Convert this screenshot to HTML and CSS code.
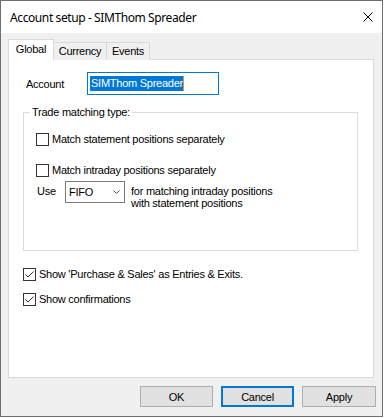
FILE: index.html
```html
<!DOCTYPE html>
<html lang="en">
<head>
    <meta charset="UTF-8">
    <meta name="viewport" content="width=device-width, initial-scale=1.0">
    <title>Account setup - SIMThom Spreader</title>
    <link rel="stylesheet" href="styles.css">
</head>
<body>
    <div class="window">
        <div class="titlebar">
            <span class="title">Account setup - SIMThom Spreader</span>
            <svg class="close" width="10" height="10" viewBox="0 0 10 10">
                <path d="M0.5 0.5 L9.5 9.5 M9.5 0.5 L0.5 9.5" stroke="#000" stroke-width="1" fill="none"/>
            </svg>
        </div>
        <div class="body">
            <div class="tabs">
                <div class="tab active" style="width: 46px">Global</div>
                <div class="tab" style="width: 53px">Currency</div>
                <div class="tab" style="width: 44px">Events</div>
            </div>
            <div class="panel">
                <div class="account-row">
                    <label class="account-label">Account</label>
                    <div class="textbox"><span class="selected">SIMThom Spreader</span><span class="caret"></span></div>
                </div>

                <fieldset class="group">
                    <legend>Trade matching type:</legend>
                    <div class="check-row first">
                        <span class="box"></span>
                        <span>Match statement positions separately</span>
                    </div>
                    <div class="check-row second">
                        <span class="box"></span>
                        <span>Match intraday positions separately</span>
                    </div>
                    <div class="use-row">
                        <span class="use-label">Use</span>
                        <div class="combo">
                            <span>FIFO</span>
                            <svg width="7" height="4" viewBox="0 0 7 4">
                                <path d="M0.5 0.5 L3.5 3.5 L6.5 0.5" stroke="#555" stroke-width="1" fill="none"/>
                            </svg>
                        </div>
                        <div class="use-text">for matching intraday positions<br>with statement positions</div>
                    </div>
                </fieldset>

                <div class="check-row outer top">
                    <span class="box">
                        <svg width="11" height="11" viewBox="0 0 11 11">
                            <path d="M1.5 5.5 L4 8 L9.5 2.5" stroke="#333" stroke-width="1" fill="none"/>
                        </svg>
                    </span>
                    <span>Show 'Purchase &amp; Sales' as Entries &amp; Exits.</span>
                </div>
                <div class="check-row outer next">
                    <span class="box">
                        <svg width="11" height="11" viewBox="0 0 11 11">
                            <path d="M1.5 5.5 L4 8 L9.5 2.5" stroke="#333" stroke-width="1" fill="none"/>
                        </svg>
                    </span>
                    <span>Show confirmations</span>
                </div>
            </div>
            <div class="buttons">
                <button class="btn" style="width: 73px">OK</button>
                <button class="btn default" style="width: 73px">Cancel</button>
                <button class="btn" style="width: 74px">Apply</button>
            </div>
        </div>
    </div>
</body>
</html>
```

FILE: styles.css
```css
* {
    box-sizing: border-box;
}
body {
    margin: 0;
    background: #fff;
    font-family: "Liberation Sans", Arial, sans-serif;
    font-size: 11px;
    letter-spacing: -0.25px;
    color: #000;
}
.window {
    width: 383px;
    height: 417px;
    border: 1px solid #6f6f6f;
    display: flex;
    flex-direction: column;
}
.titlebar {
    height: 32px;
    background: #fff;
    display: flex;
    align-items: center;
    justify-content: space-between;
    padding: 0 9px 0 9px;
}
.title {
    font-family: "Noto Sans", sans-serif;
    font-size: 12px;
    letter-spacing: -0.4px;
}
.body {
    flex: 1;
    background: #f0f0f0;
    padding: 7px 6px 8px 7px;
    display: flex;
    flex-direction: column;
}
.tabs {
    display: flex;
    align-items: flex-end;
    height: 20px;
    margin-bottom: -1px;
    position: relative;
    z-index: 1;
}
.tab {
    height: 18px;
    line-height: 17px;
    text-align: center;
    border: 1px solid #d9d9d9;
    border-bottom: none;
    background: #f0f0f0;
}
.tab + .tab {
    margin-left: -1px;
}
.tab.active {
    height: 21px;
    line-height: 18px;
    background: #fff;
    position: relative;
    z-index: 2;
}
.tab.active + .tab {
    border-left: none;
    margin-left: 0;
}
.panel {
    width: 366px;
    height: 319px;
    border: 1px solid #d9d9d9;
    background: #fff;
}
.account-row {
    display: flex;
    align-items: center;
    margin-top: 12px;
    padding-left: 17px;
}
.account-label {
    width: 61px;
}
.textbox {
    width: 132px;
    height: 23px;
    border: 1px solid #0078d7;
    padding: 2px 2px;
    display: flex;
    align-items: center;
}
.selected {
    background: #0078d7;
    color: #fff;
    line-height: 15px;
    padding: 0 0 0 1px;
}
.caret {
    width: 1px;
    height: 15px;
    background: #e8912e;
}
.group {
    margin: 11px 0 0 14px;
    width: 335px;
    height: 145px;
    border: 1px solid #dcdcdc;
    padding: 0 6px;
}
.group legend {
    padding: 0 2px;
    line-height: 13px;
}
.check-row {
    display: flex;
    align-items: center;
    gap: 3px;
    height: 13px;
    line-height: 13px;
    margin-left: 6px;
}
.check-row.first {
    margin-top: 14px;
}
.check-row.second {
    margin-top: 18px;
}
.box {
    width: 13px;
    height: 13px;
    border: 1px solid #333;
    background: #fff;
    display: flex;
}
.use-row {
    display: flex;
    align-items: flex-start;
    margin: 4px 0 0 7px;
}
.use-label {
    width: 28px;
    line-height: 13px;
    margin-top: 4px;
}
.combo {
    width: 60px;
    height: 22px;
    border: 1px solid #7a7a7a;
    background: #fff;
    display: flex;
    align-items: center;
    justify-content: space-between;
    padding: 0 4px 0 3px;
}
.use-text {
    margin-left: 6px;
    margin-top: 4px;
    line-height: 12px;
}
.check-row.outer {
    margin-left: 14px;
}
.check-row.top {
    margin-top: 17px;
}
.check-row.next {
    margin-top: 12px;
}
.buttons {
    display: flex;
    justify-content: flex-end;
    gap: 8px;
    margin-top: 8px;
}
.btn {
    height: 21px;
    background: #e1e1e1;
    border: 1px solid #adadad;
    font-family: "Liberation Sans", Arial, sans-serif;
    font-size: 11px;
    letter-spacing: -0.25px;
    color: #000;
    padding: 0;
}
.btn.default {
    border: 2px solid #0078d7;
}
```
